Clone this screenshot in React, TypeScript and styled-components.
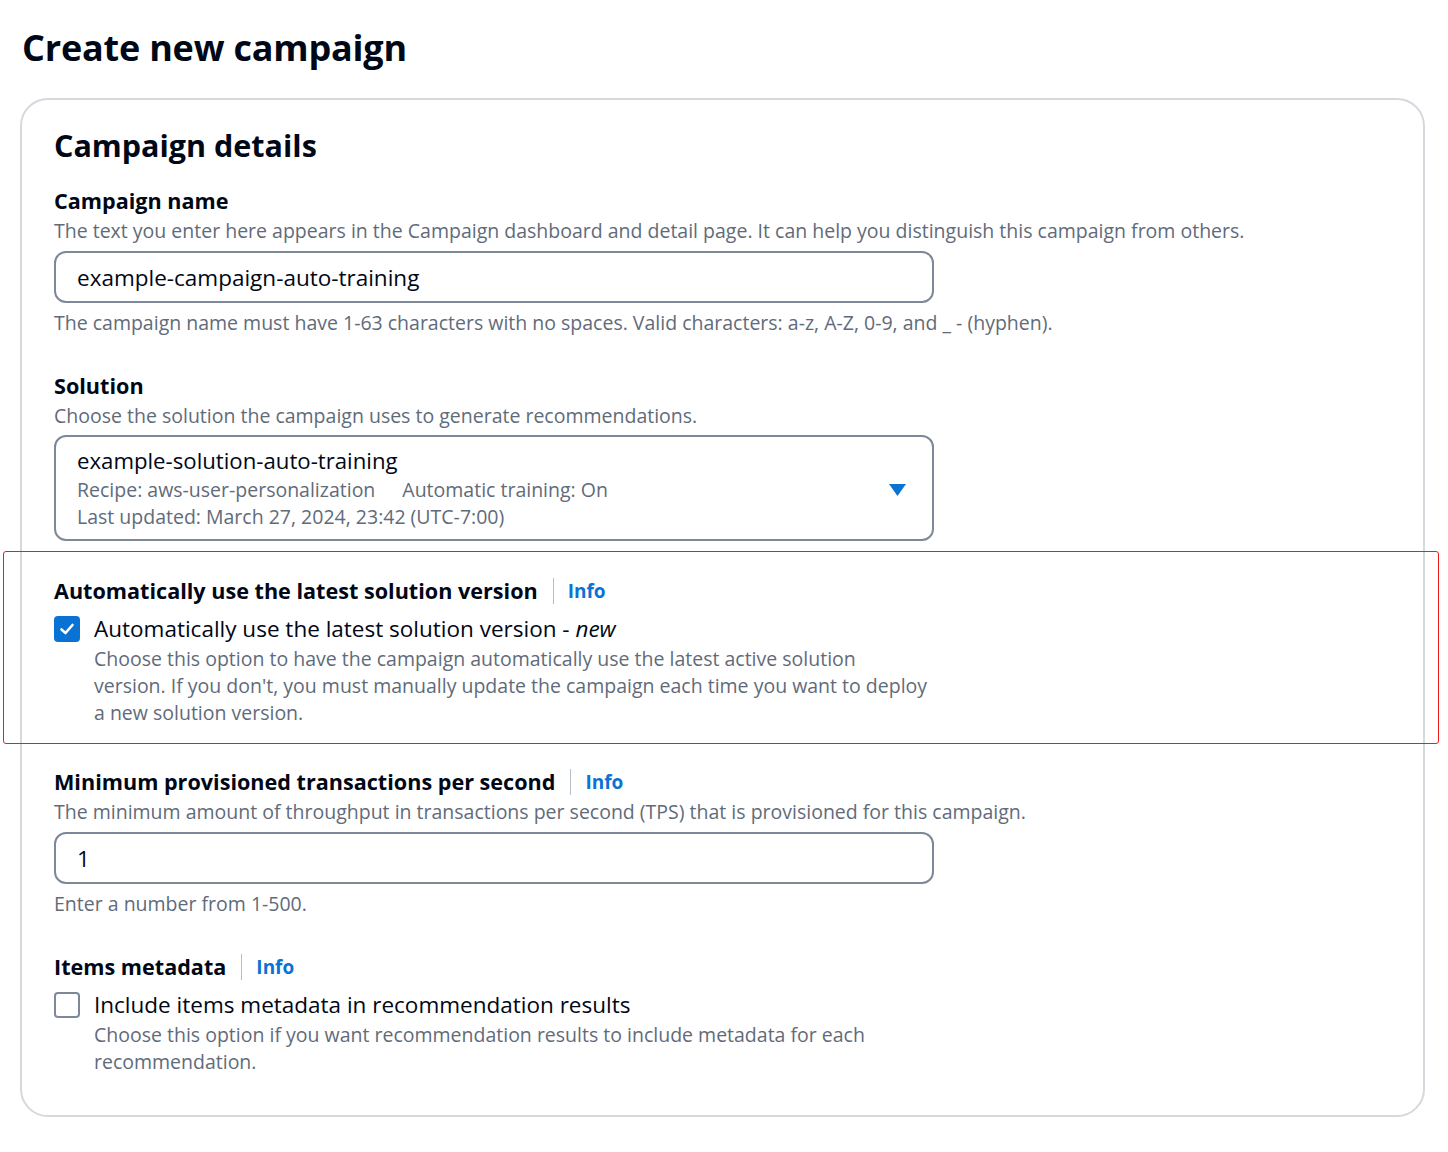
import React from 'react'
import styled, { createGlobalStyle } from 'styled-components'

const GlobalStyle = createGlobalStyle`
  body {
    margin: 0;
    background: #ffffff;
    font-family: "Open Sans", "Noto Sans", "Liberation Sans", sans-serif;
    color: #000716;
  }
`

const Page = styled.div`
  width: 1448px;
  padding: 24px 23px 30px 20px;
  box-sizing: border-box;
`

const Title = styled.h1`
  margin: 0 0 26px 2px;
  font-size: 36px;
  line-height: 48px;
  font-weight: 700;
  letter-spacing: -0.2px;
`

const Card = styled.div`
  border: 2px solid #d5d9de;
  border-radius: 28px;
  padding: 25px 32px 40px 32px;
`

const CardTitle = styled.h2`
  margin: 0 0 21px 0;
  font-size: 30.5px;
  line-height: 40px;
  font-weight: 700;
`

const Field = styled.div<{ $gap?: number }>`
  margin-bottom: ${p => p.$gap ?? 35}px;
  &:last-child { margin-bottom: 0; }
`

const Highlight = styled(Field)`
  position: relative;
  &::before {
    content: '';
    position: absolute;
    left: -51px;
    right: -48px;
    top: -25px;
    bottom: -18px;
    border: 1.5px solid #f01c1c;
    border-radius: 3px;
    pointer-events: none;
  }
`

const LabelRow = styled.div`
  display: flex;
  align-items: center;
  height: 30px;
`

const Label = styled.span`
  font-size: 21.6px;
  font-weight: 700;
  line-height: 30px;
`

const Divider = styled.span`
  width: 1px;
  height: 26px;
  background: #b6bec9;
  margin: 0 14px 0 15px;
`

const InfoLink = styled.a`
  color: #0972d3;
  font-weight: 700;
  font-size: 19px;
  text-decoration: none;
  line-height: 30px;
`

const Desc = styled.div<{ $indent?: boolean; $width?: number }>`
  margin-top: 1px;
  font-size: 19.5px;
  line-height: 27px;
  color: #5f6b7a;
  margin-left: ${p => (p.$indent ? '40px' : '0')};
  max-width: ${p => (p.$width ? `${p.$width}px` : 'none')};
`

const Help = styled(Desc)`
  margin-top: 6px;
`

const Input = styled.div`
  margin-top: 7px;
  width: 880px;
  height: 52px;
  box-sizing: border-box;
  border: 2.5px solid #7d8998;
  border-radius: 12px;
  padding: 0 21px;
  display: flex;
  align-items: center;
  font-size: 22.5px;
  color: #000716;
`

const Select = styled.div`
  margin-top: 6px;
  width: 880px;
  height: 106px;
  box-sizing: border-box;
  border: 2.5px solid #7d8998;
  border-radius: 12px;
  padding: 9px 26px 0 21px;
  display: flex;
  justify-content: space-between;
  align-items: center;
`

const SelectText = styled.div`
  align-self: flex-start;
`

const SelectValue = styled.div`
  font-size: 22.2px;
  line-height: 30px;
  color: #000716;
`

const SelectMeta = styled.div`
  font-size: 19.5px;
  line-height: 27px;
  color: #5f6b7a;
  display: flex;
  gap: 27px;
`

const Caret = styled.svg`
  width: 17px;
  height: 12px;
  margin-bottom: 6px;
`

const CheckRow = styled.div`
  display: flex;
  align-items: center;
  margin-top: 8px;
  height: 30px;
`

const Box = styled.span<{ $checked?: boolean }>`
  width: 26px;
  height: 26px;
  box-sizing: border-box;
  border-radius: 4px;
  margin-right: 14px;
  display: flex;
  align-items: center;
  justify-content: center;
  background: ${p => (p.$checked ? '#0972d3' : '#ffffff')};
  border: ${p => (p.$checked ? 'none' : '2.5px solid #7d8998')};
`

const CheckLabel = styled.span`
  font-size: 22.5px;
  line-height: 30px;
  color: #000716;
  em { font-style: italic; }
`

const Info = () => (
  <>
    <Divider />
    <InfoLink href="#">Info</InfoLink>
  </>
)

export default function App() {
  return (
    <Page>
      <GlobalStyle />
      <Title>Create new campaign</Title>
      <Card>
        <CardTitle>Campaign details</CardTitle>

        <Field>
          <LabelRow><Label>Campaign name</Label></LabelRow>
          <Desc>The text you enter here appears in the Campaign dashboard and detail page. It can help you distinguish this campaign from others.</Desc>
          <Input>example-campaign-auto-training</Input>
          <Help>The campaign name must have 1-63 characters with no spaces. Valid characters: a-z, A-Z, 0-9, and _ - (hyphen).</Help>
        </Field>

        <Field>
          <LabelRow><Label>Solution</Label></LabelRow>
          <Desc>Choose the solution the campaign uses to generate recommendations.</Desc>
          <Select>
            <SelectText>
              <SelectValue>example-solution-auto-training</SelectValue>
              <SelectMeta>
                <span>Recipe: aws-user-personalization</span>
                <span>Automatic training: On</span>
              </SelectMeta>
              <SelectMeta>Last updated: March 27, 2024, 23:42 (UTC-7:00)</SelectMeta>
            </SelectText>
            <Caret viewBox="0 0 17 12">
              <path d="M0 0 H17 L8.5 12 Z" fill="#0972d3" />
            </Caret>
          </Select>
        </Field>

        <Highlight $gap={41}>
          <LabelRow>
            <Label>Automatically use the latest solution version</Label>
            <Info />
          </LabelRow>
          <CheckRow>
            <Box $checked>
              <svg width="16" height="16" viewBox="0 0 16 16">
                <path d="M2.5 8.5 L6.5 12 L13.5 4" fill="none" stroke="#fff" strokeWidth="2.6" strokeLinecap="round" strokeLinejoin="round" />
              </svg>
            </Box>
            <CheckLabel>Automatically use the latest solution version - <em>new</em></CheckLabel>
          </CheckRow>
          <Desc $indent $width={837}>Choose this option to have the campaign automatically use the latest active solution version. If you don't, you must manually update the campaign each time you want to deploy a new solution version.</Desc>
        </Highlight>

        <Field>
          <LabelRow>
            <Label>Minimum provisioned transactions per second</Label>
            <Info />
          </LabelRow>
          <Desc>The minimum amount of throughput in transactions per second (TPS) that is provisioned for this campaign.</Desc>
          <Input>1</Input>
          <Help>Enter a number from 1-500.</Help>
        </Field>

        <Field>
          <LabelRow>
            <Label>Items metadata</Label>
            <Info />
          </LabelRow>
          <CheckRow>
            <Box />
            <CheckLabel>Include items metadata in recommendation results</CheckLabel>
          </CheckRow>
          <Desc $indent $width={800}>Choose this option if you want recommendation results to include metadata for each recommendation.</Desc>
        </Field>
      </Card>
    </Page>
  )
}
